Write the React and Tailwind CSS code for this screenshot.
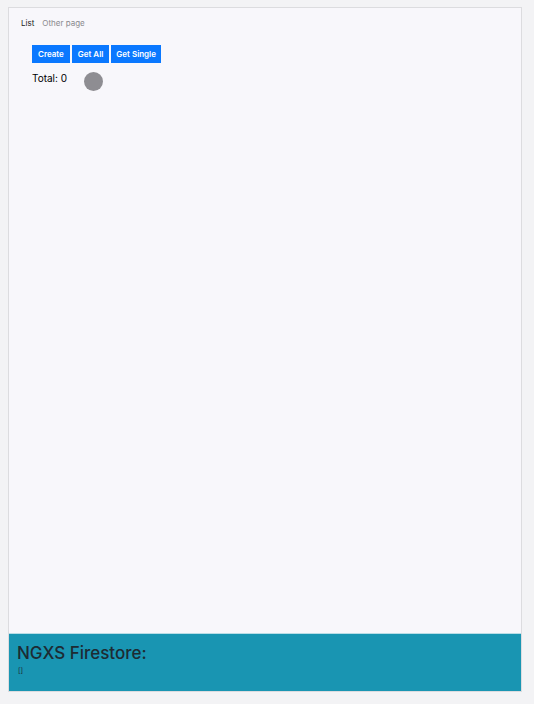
export default function App() {
  return (
    <div className="w-[534px] h-[704px] bg-[#f3f3f5] pt-[7px] pl-[8px] font-['Inter',sans-serif]">
      <div className="w-[514px] h-[685px] border border-[#dcdcdf] bg-[#f8f7fb] flex flex-col">
        <div className="flex-1">
          <div className="flex gap-[8px] pl-[12px] pt-[10px] text-[8px] leading-[10px]">
            <span className="text-[#222]">List</span>
            <span className="text-[#8a8a8e]">Other page</span>
          </div>
          <div className="pl-[23px] pt-[17px]">
            <div className="flex gap-[2px]">
              <button className="h-[18px] px-[6px] bg-[#0a78ff] text-white text-[8px] font-semibold">Create</button>
              <button className="h-[18px] px-[6px] bg-[#0a78ff] text-white text-[8px] font-semibold">Get All</button>
              <button className="h-[18px] px-[5px] bg-[#0a78ff] text-white text-[8px] font-semibold">Get Single</button>
            </div>
            <div className="flex items-start mt-[9px]">
              <span className="text-[10px] leading-[13px] text-black w-[52px]">Total: 0</span>
              <span className="w-[19px] h-[19px] rounded-full bg-[#8e8d92]"></span>
            </div>
          </div>
        </div>
        <div className="h-[58px] bg-[#1995b2] border-t border-[#b9dde6] px-[8px] pt-[9px]">
          <h1 className="text-[17px] leading-[20px] text-[#1d2b33] font-medium">NGXS Firestore:</h1>
          <pre className="mt-[3px] ml-[1px] text-[7px] leading-[9px] text-[#1d2b33] font-['Inter',sans-serif]">[]</pre>
        </div>
      </div>
    </div>
  );
}
